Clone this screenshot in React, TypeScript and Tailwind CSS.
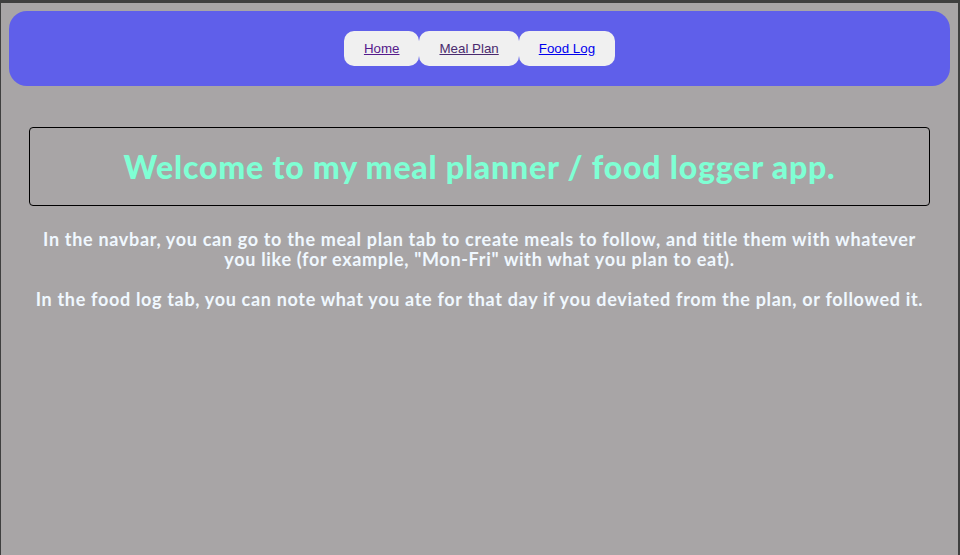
export default function App() {
  const links = [
    { label: 'Home', color: 'text-[#551a8b]' },
    { label: 'Meal Plan', color: 'text-[#4a2a6e]' },
    { label: 'Food Log', color: 'text-[#0000ee]' },
  ]

  return (
    <div className="min-h-screen bg-[#3f3f3f] pt-[3px] pl-px pr-[2px]">
      <div className="min-h-[552px] bg-[#a8a5a6] pt-2 px-2 font-['Lato',sans-serif]">
        <nav className="flex justify-center items-center h-[75px] bg-[#5f5fea] rounded-[18px]">
          {links.map((l) => (
            <a
              key={l.label}
              href="#"
              className={`flex items-center justify-center h-[35px] px-[20px] bg-[#f0f0f0] rounded-[10px] font-['Liberation_Sans',Arial,sans-serif] text-[13.33px] underline ${l.color}`}
            >
              {l.label}
            </a>
          ))}
        </nav>

        <div className="mx-5 mt-[41px] h-[79px] flex items-center justify-center border border-black rounded-[4px]">
          <h1 className="text-[32px] font-black tracking-[0.8px] text-[#7fffd4]">
            Welcome to my meal planner / food logger app.
          </h1>
        </div>

        <div className="mt-[23px] px-5 text-center text-[18px] font-bold tracking-[0.68px] text-[#f0f8ff] leading-[20px]">
          <p>
            In the navbar, you can go to the meal plan tab to create meals to follow, and title them with whatever you
            like (for example, "Mon-Fri" with what you plan to eat).
          </p>
          <p className="mt-[20px]">
            In the food log tab, you can note what you ate for that day if you deviated from the plan, or followed it.
          </p>
        </div>
      </div>
    </div>
  )
}
